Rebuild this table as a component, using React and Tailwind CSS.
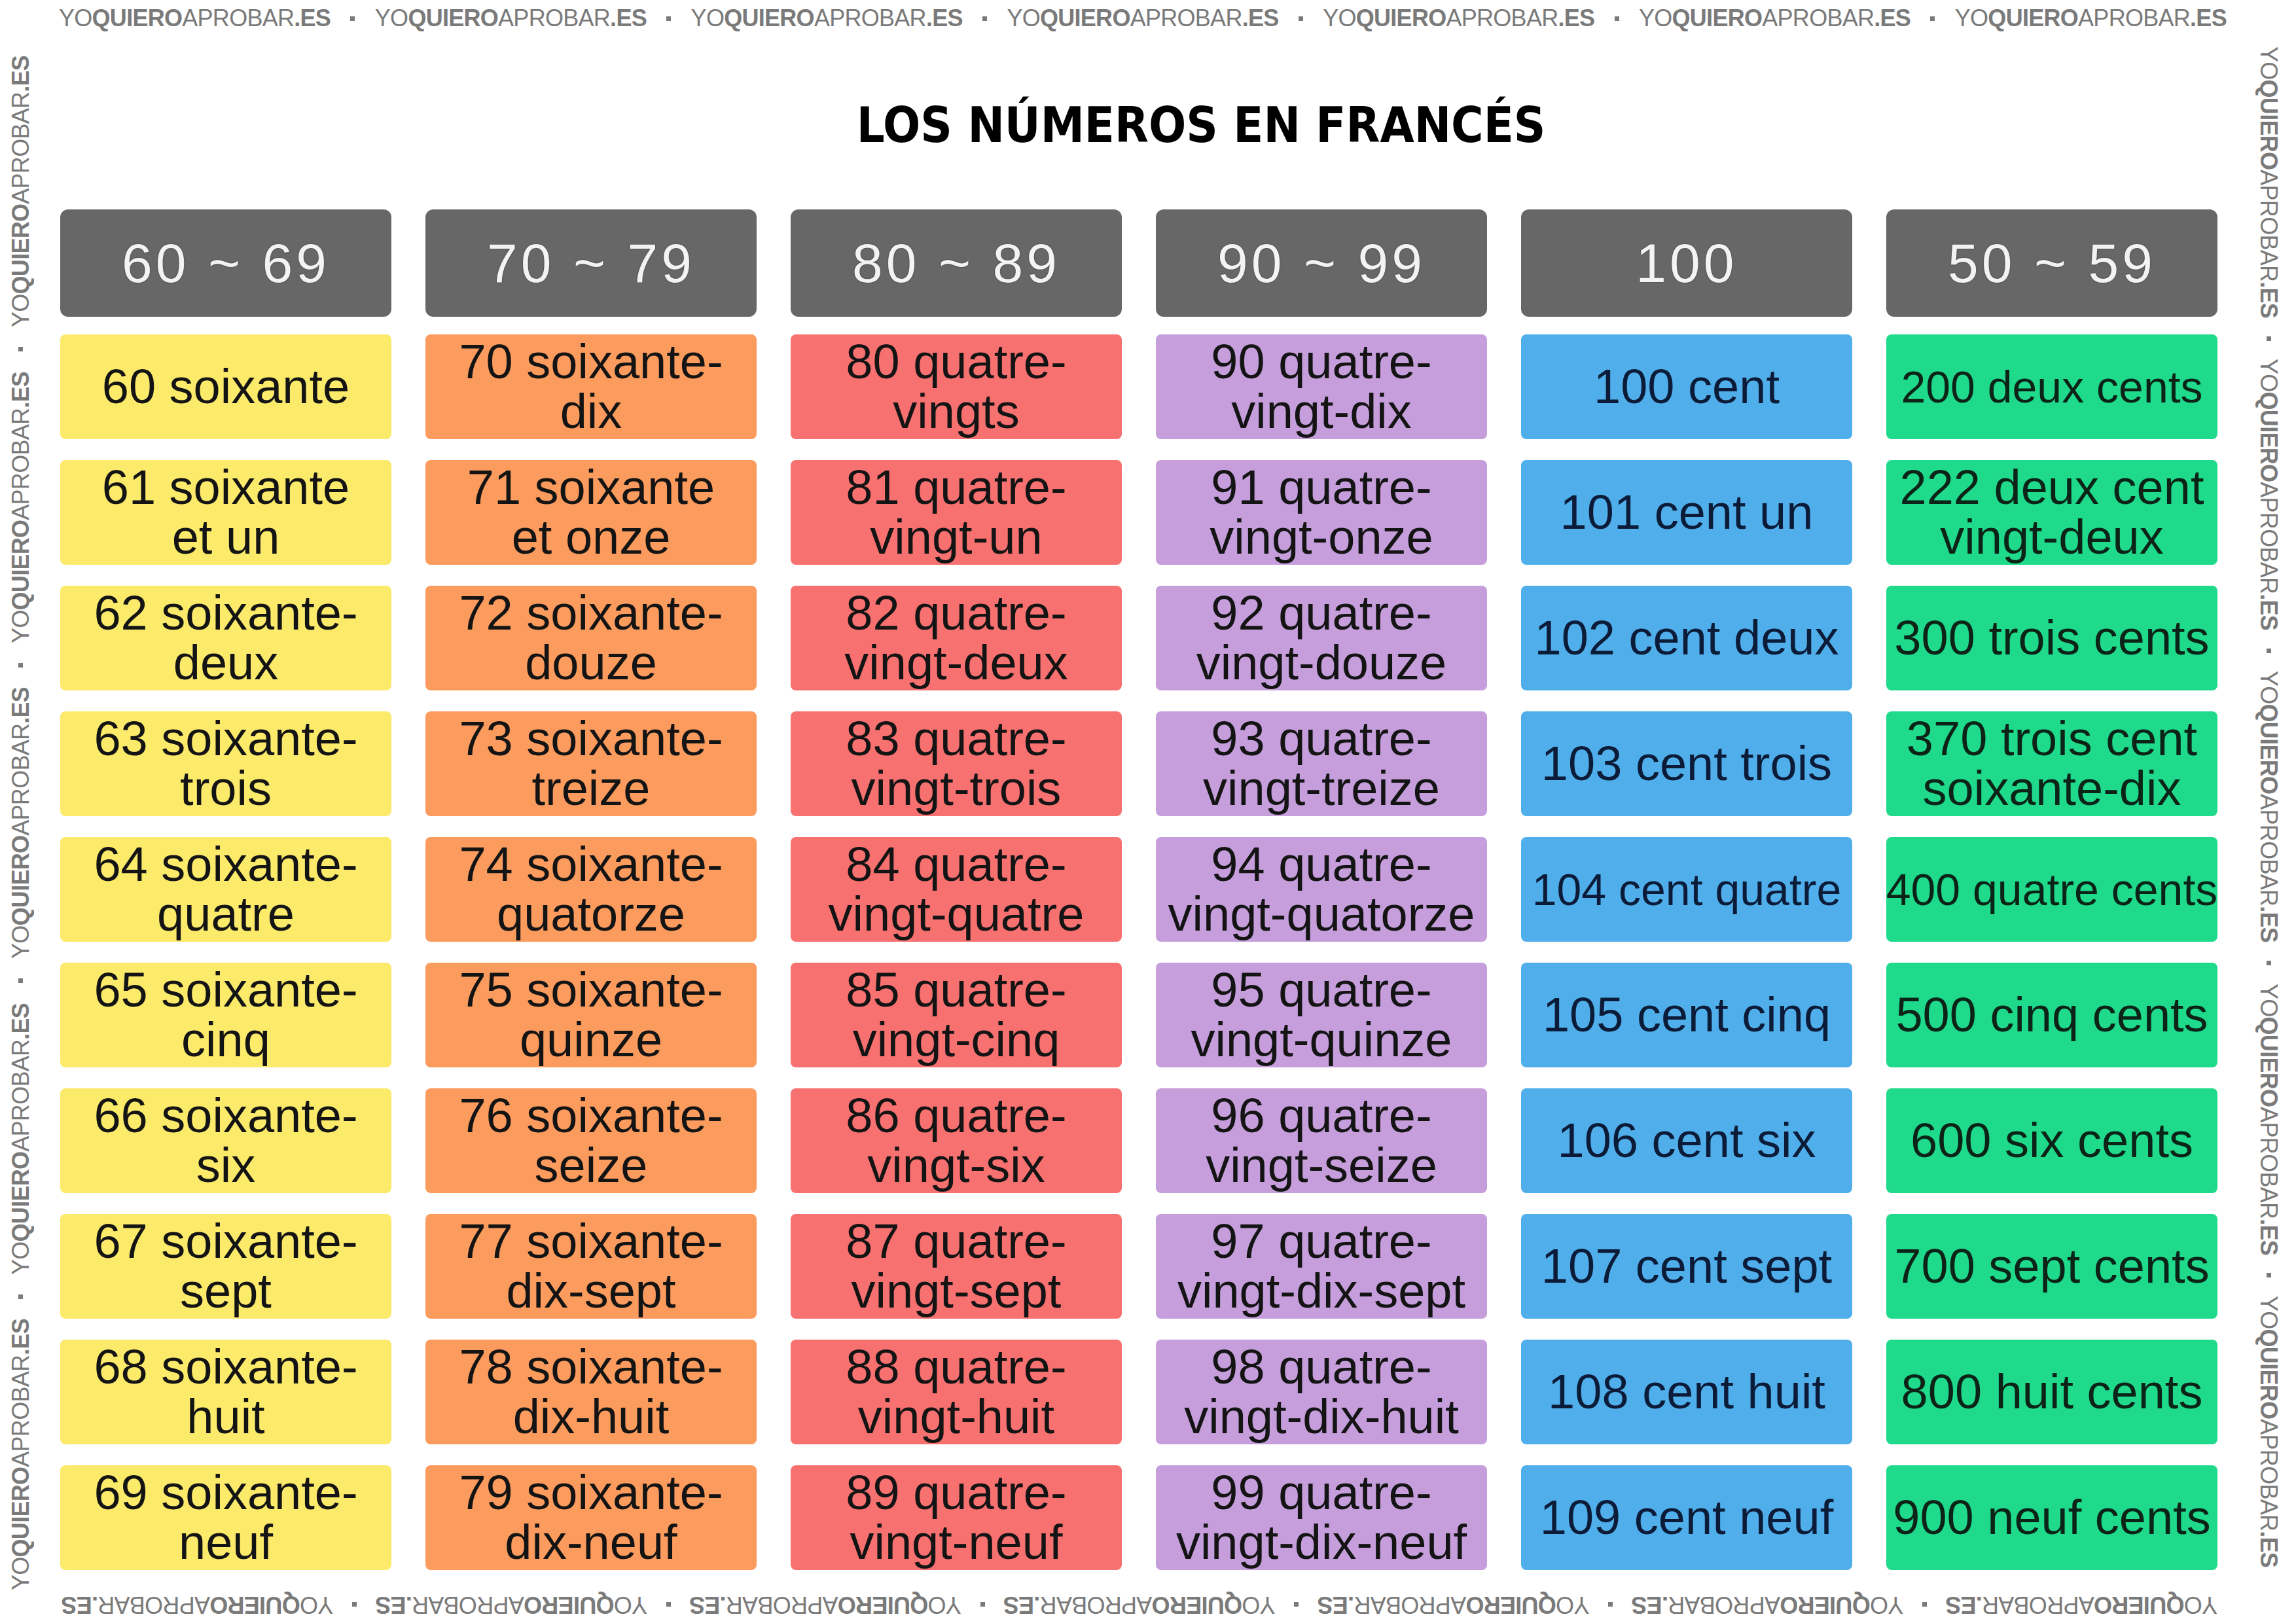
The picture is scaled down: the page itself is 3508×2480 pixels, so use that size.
import clsx from "clsx";

const columns = [
  {
    header: "60 ~ 69",
    bg: "bg-[#fcea6b]",
    ink: "text-[#141414]",
    cells: [
      ["60 soixante"],
      ["61 soixante", "et un"],
      ["62 soixante-", "deux"],
      ["63 soixante-", "trois"],
      ["64 soixante-", "quatre"],
      ["65 soixante-", "cinq"],
      ["66 soixante-", "six"],
      ["67 soixante-", "sept"],
      ["68 soixante-", "huit"],
      ["69 soixante-", "neuf"],
    ],
  },
  {
    header: "70 ~ 79",
    bg: "bg-[#fb9b5e]",
    ink: "text-[#141414]",
    cells: [
      ["70 soixante-", "dix"],
      ["71 soixante", "et onze"],
      ["72 soixante-", "douze"],
      ["73 soixante-", "treize"],
      ["74 soixante-", "quatorze"],
      ["75 soixante-", "quinze"],
      ["76 soixante-", "seize"],
      ["77 soixante-", "dix-sept"],
      ["78 soixante-", "dix-huit"],
      ["79 soixante-", "dix-neuf"],
    ],
  },
  {
    header: "80 ~ 89",
    bg: "bg-[#f77170]",
    ink: "text-[#141414]",
    cells: [
      ["80 quatre-", "vingts"],
      ["81 quatre-", "vingt-un"],
      ["82 quatre-", "vingt-deux"],
      ["83 quatre-", "vingt-trois"],
      ["84 quatre-", "vingt-quatre"],
      ["85 quatre-", "vingt-cinq"],
      ["86 quatre-", "vingt-six"],
      ["87 quatre-", "vingt-sept"],
      ["88 quatre-", "vingt-huit"],
      ["89 quatre-", "vingt-neuf"],
    ],
  },
  {
    header: "90 ~ 99",
    bg: "bg-[#c59edb]",
    ink: "text-[#141414]",
    cells: [
      ["90 quatre-", "vingt-dix"],
      ["91 quatre-", "vingt-onze"],
      ["92 quatre-", "vingt-douze"],
      ["93 quatre-", "vingt-treize"],
      ["94 quatre-", "vingt-quatorze"],
      ["95 quatre-", "vingt-quinze"],
      ["96 quatre-", "vingt-seize"],
      ["97 quatre-", "vingt-dix-sept"],
      ["98 quatre-", "vingt-dix-huit"],
      ["99 quatre-", "vingt-dix-neuf"],
    ],
  },
  {
    header: "100",
    bg: "bg-[#50afeb]",
    ink: "text-[#0c1c38]",
    cells: [
      ["100 cent"],
      ["101 cent un"],
      ["102 cent deux"],
      ["103 cent trois"],
      ["104 cent quatre"],
      ["105 cent cinq"],
      ["106 cent six"],
      ["107 cent sept"],
      ["108 cent huit"],
      ["109 cent neuf"],
    ],
  },
  {
    header: "50 ~ 59",
    bg: "bg-[#20da8c]",
    ink: "text-[#0b2417]",
    cells: [
      ["200 deux cents"],
      ["222 deux cent", "vingt-deux"],
      ["300 trois cents"],
      ["370 trois cent", "soixante-dix"],
      ["400 quatre cents"],
      ["500 cinq cents"],
      ["600 six cents"],
      ["700 sept cents"],
      ["800 huit cents"],
      ["900 neuf cents"],
    ],
  },
];

// lines that would not fit the cell at the normal size
const tight = ["400 quatre cents", "200 deux cents", "104 cent quatre"];

const Mark = ({ vertical }) => (
  <span className={clsx("whitespace-nowrap", vertical && "[writing-mode:vertical-rl]")}>
    YO<b className="font-bold">QUIERO</b>APROBAR<b className="font-bold">.ES</b>
  </span>
);

const MarkLine = ({ count, vertical, className }) => {
  const items = [];
  for (let i = 0; i < count; i++) {
    if (i > 0) {
      items.push(<span key={"dot" + i} className="w-[7px] h-[7px] shrink-0 bg-[#7a7a7a]" />);
    }
    items.push(<Mark key={i} vertical={vertical} />);
  }
  return (
    <div
      className={clsx(
        "flex items-center justify-between text-[#7a7a7a] text-[36px] tracking-[-0.02em] leading-none font-['Liberation_Sans_Narrow','Liberation_Sans',sans-serif]",
        vertical && "flex-col",
        className
      )}
    >
      {items}
    </div>
  );
};

const Cell = ({ lines, bg, ink }) => (
  <div
    className={clsx(
      "h-[160px] rounded-lg flex flex-col items-center justify-center px-1 leading-[76px]",
      bg,
      ink
    )}
  >
    {lines.map((line) => (
      <span
        key={line}
        className={clsx("whitespace-nowrap", tight.includes(line) ? "text-[68px]" : "text-[74px]")}
      >
        {line}
      </span>
    ))}
  </div>
);

export default function App() {
  return (
    <div className="w-[3508px] h-[2480px] bg-white flex overflow-hidden">
      {/* left watermark, reads bottom to top */}
      <div className="w-[64px] shrink-0 pt-[85px] flex justify-center">
        <MarkLine count={5} vertical className="h-[2345px] rotate-180" />
      </div>

      <div className="w-[3360px] shrink-0 flex flex-col">
        <div className="h-[56px] flex items-center pl-[26px]">
          <MarkLine count={7} className="w-[3312px]" />
        </div>

        <h1 className="mt-[98px] pl-[182px] text-center text-[75px] leading-none font-bold text-black font-stretch-condensed font-['DejaVu_Sans_Condensed','DejaVu_Sans',sans-serif]">
          LOS NÚMEROS EN FRANCÉS
        </h1>

        <div className="mt-[91px] ml-[28px] w-[3296px] grid grid-cols-6 gap-x-[52px] font-['Liberation_Sans',sans-serif]">
          {columns.map((col) => (
            <div key={col.header} className="flex flex-col">
              <div className="h-[164px] rounded-xl bg-[#676767] flex items-center justify-center text-[84px] tracking-[0.06em] text-[#f3f3f3] [text-shadow:0_0_2px_#333]">
                {col.header}
              </div>
              <div className="mt-[27px] flex flex-col gap-[32px]">
                {col.cells.map((lines) => (
                  <Cell key={lines[0]} lines={lines} bg={col.bg} ink={col.ink} />
                ))}
              </div>
            </div>
          ))}
        </div>

        <div className="mt-[35px] pl-[30px]">
          <MarkLine count={7} className="w-[3294px] rotate-180" />
        </div>
      </div>

      {/* right watermark, reads top to bottom */}
      <div className="flex-1 pt-[71px] flex justify-center">
        <MarkLine count={5} vertical className="h-[2324px]" />
      </div>
    </div>
  );
}
